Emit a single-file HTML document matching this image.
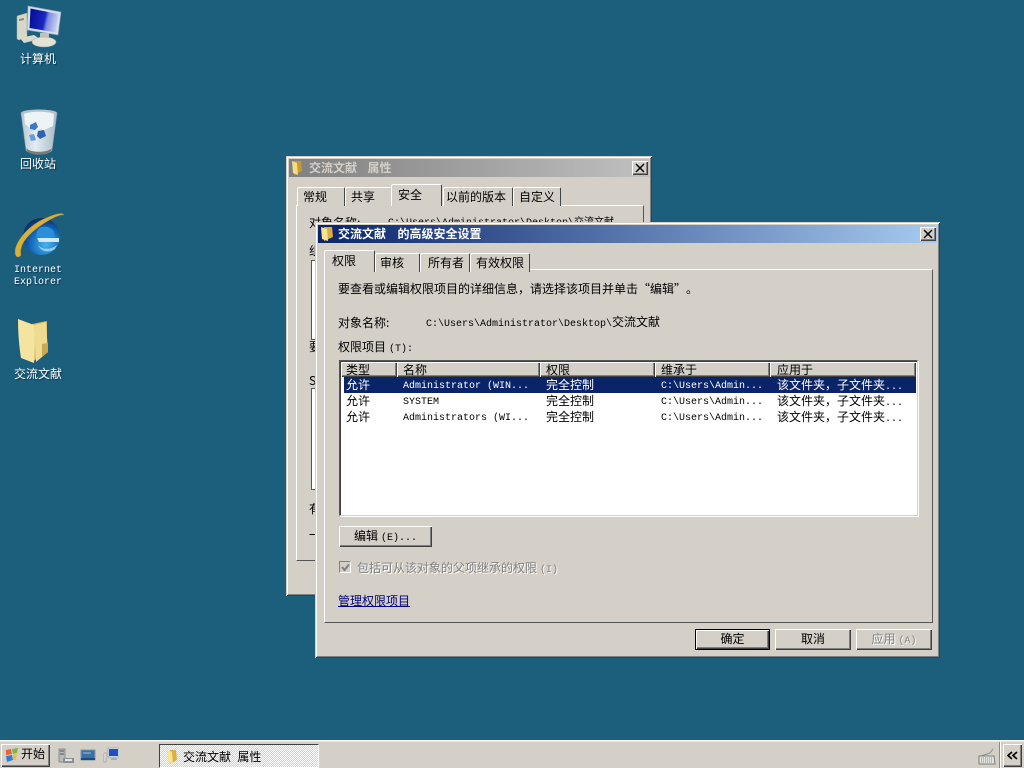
<!DOCTYPE html>
<html><head><meta charset="utf-8"><title>交流文献</title>
<style>
*{box-sizing:border-box}
html,body{margin:0;padding:0;width:1024px;height:768px;overflow:hidden;background:#1c5f7d}
body{position:relative;font:12px/14px "WenQuanYi Zen Hei","Noto Sans CJK SC",sans-serif;color:#000}
div,span,a,svg{position:absolute;white-space:pre}
.m{font-family:"Liberation Mono","WenQuanYi Zen Hei",monospace;font-size:10px;letter-spacing:0}
.s{position:static;margin-left:3px}
.d{position:static}
.q{position:static;display:inline-block;width:12px}
.win{background:#d4d0c8;box-shadow:inset 1px 1px 0 #d4d0c8,inset -1px -1px 0 #404040,inset 2px 2px 0 #fff,inset -2px -2px 0 #808080}
.panel{background:#d4d0c8;border:1px solid;border-color:#fff #555 #555 #fff}
.tab{background:#d4d0c8;border-left:1px solid #fff;border-top:1px solid #fff;border-right:1px solid #444;height:19px;text-align:left;border-radius:2px 2px 0 0;line-height:17px;padding-left:5px}
.tab.on{z-index:2;height:22px;background:#d4d0c8;line-height:19px;padding-left:7px}
.btn{background:#d4d0c8;box-shadow:inset 1px 1px 0 #fff,inset -1px -1px 0 #404040,inset -2px -2px 0 #808080;text-align:center;line-height:20px}
.x{width:16px;height:14px;background:#d4d0c8;box-shadow:inset 1px 1px 0 #fff,inset -1px -1px 0 #404040,inset -2px -2px 0 #808080}
.desk{color:#fff;text-align:center;width:76px;left:0;text-shadow:1px 1px 1px #0a3347}
.hd{top:1px;height:15px;background:#d4d0c8;box-shadow:inset 1px 1px 0 #fff,inset -1px -1px 0 #404040,inset -2px -2px 0 #808080;padding-left:5px;line-height:15px;overflow:hidden}
.w{color:#fff}
</style></head><body>

<!-- Desktop icons -->
<svg style="left:14px;top:4px" width="50" height="46" viewBox="0 0 50 46">
<defs><linearGradient id="scr" gradientUnits="userSpaceOnUse" x1="16" y1="14" x2="44" y2="20"><stop offset="0" stop-color="#05109a"/><stop offset=".5" stop-color="#1a26c0"/><stop offset=".62" stop-color="#7d8ce0"/><stop offset="1" stop-color="#cdd5f4"/></linearGradient></defs>
<path d="M3 12l10-3v24l-8 3-2-1z" fill="#d8d8c8" stroke="#a8a898" stroke-width=".5"/>
<path d="M5 15l5-1v2l-5 1z" fill="#8a8a72"/>
<path d="M6 34l14-3 6 4-16 4z" fill="#dadad0"/>
<path d="M14 2L47 8 44 31 13 26Z" fill="#d6e0ec" stroke="#8fa0b4" stroke-width=".7"/>
<path d="M16.500 4.500L44.500 10 42 28.500 15.500 24Z" fill="url(#scr)"/>
<path d="M26 29h9v6h-9z" fill="#c4c4b6"/>
<ellipse cx="30" cy="38" rx="12" ry="5" fill="#e2e2d6" stroke="#a4a498" stroke-width=".5"/>
</svg>
<div class="desk" style="top:52px">计算机</div>
<svg style="left:20px;top:108px" width="40" height="48" viewBox="0 0 40 48">
<defs><linearGradient id="bin" x1="0" x2="1"><stop offset="0" stop-color="#b4c6d2"/><stop offset=".4" stop-color="#e4ecf2"/><stop offset="1" stop-color="#a6bac6"/></linearGradient></defs>
<path d="M1 5C1 1 37 1 37 5L32 42C31 47 8 47 6 42Z" fill="url(#bin)" stroke="#8fa1ac" stroke-width=".6"/>
<ellipse cx="19" cy="5" rx="17.500" ry="3.500" fill="#b4c4ce"/>
<path d="M4 6C10 3 28 3 34 6L33 18 24 22 10 20 5 16Z" fill="#eef3f6"/>
<path d="M10 17l6-3 2 5-3 3-5-1z" fill="#3c78c8"/><path d="M18 23l6-1 2 6-6 3-3-3z" fill="#2f62b8"/><path d="M9 27l5-1 2 6-5 1z" fill="#6a9ad8"/>
<path d="M6 40C10 45 28 45 32 40L31 43C28 48 10 48 7 43Z" fill="#7b7b7a"/>
</svg>
<div class="desk" style="top:157px">回收站</div>
<svg style="left:14px;top:212px" width="50" height="50" viewBox="0 0 50 50">
<defs><radialGradient id="ie" cx=".62" cy=".72" r=".85"><stop offset="0" stop-color="#4ab4ea"/><stop offset=".5" stop-color="#1268bc"/><stop offset=".85" stop-color="#0a2f66"/><stop offset="1" stop-color="#04142e"/></radialGradient></defs>
<circle cx="27.500" cy="24.500" r="18.500" fill="url(#ie)"/>
<path d="M23 19C25 13 37 13 40 20L41 25H22Z" fill="#2a8ed8"/>
<path d="M23 26H45V30H25Z" fill="#cfeaf8"/>
<path d="M24 33C28 38 37 38 43 33L41 37C35 41 27 40 24 33Z" fill="#8cd0f2"/>
<path d="M2 44C-3 35 12 14 32 6 41 2 49 0 50 3 45 2 35 8 26 14 12 24 5 34 7 43 5 46 3 45 2 44Z" fill="#d8b03a" stroke="#a8852a" stroke-width=".4"/>
</svg>
<div class="desk m" style="top:265px;line-height:12px">Internet
Explorer</div>
<svg style="left:14px;top:316px" width="40" height="50" viewBox="0 0 40 50">
<path d="M18 8L33 5V36L18 46Z" fill="#d8b858"/>
<path d="M4 3L20 9C21 20 21 34 20 47L7 42C5 30 4 16 4 3Z" fill="#f4e4a0"/>
<path d="M20 9L32 6 34 36 22 46Z" fill="#eedb90"/><path d="M28 28l6-1v9l-6 5z" fill="#c8a850"/>
</svg>
<div class="desk" style="top:367px">交流文献</div>

<!-- Back window -->
<div class="win" style="left:286px;top:156px;width:366px;height:440px">
 <div style="left:3px;top:3px;width:360px;height:18px;background:linear-gradient(90deg,#808080,#c0c0c0)"></div>
 <svg style="left:5px;top:4px" width="12" height="16" viewBox="0 0 12 16"><path d="M3 1h7l1 10-8 4z" fill="#c99a34"/><path d="M1 1l5 2 1 12-5-2z" fill="#f6dc80"/></svg>
 <div style="left:23px;top:5px;color:#d4d0c8;font-weight:bold;word-spacing:2.500px">交流文献  属性</div>
 <div class="x" style="left:346px;top:5px"><svg style="left:3px;top:2px" width="10" height="10"><path d="M1 1L9 9M9 1L1 9" stroke="#000" stroke-width="1.500"/></svg></div>
 <div class="panel" style="left:10px;top:49px;width:348px;height:356px"></div>
 <div class="tab" style="left:11px;top:31px;width:48px">常规</div>
 <div class="tab" style="left:59px;top:31px;width:47px">共享</div>
 <div class="tab on" style="left:105px;top:28px;width:51px;padding-left:6px">安全</div>
 <div class="tab" style="left:157px;top:31px;width:70px;padding-left:2px">以前的版本</div>
 <div class="tab" style="left:227px;top:31px;width:48px">自定义</div>
 <div style="left:23px;top:60px">对象名称:</div>
 <div class="m" style="left:102px;top:61px">C:\Users\Administrator\Desktop\交流文献</div>
 <div style="left:23px;top:88px">组</div>
 <div style="left:25px;top:104px;width:300px;height:80px;background:#fff;border:1px solid #555"></div>
 <div style="left:23px;top:184px">要</div>
 <div style="left:23px;top:218px">S</div>
 <div style="left:25px;top:232px;width:300px;height:102px;background:#fff;border:1px solid #555"></div>
 <div style="left:23px;top:346px">有</div>
 <div style="left:23px;top:372px">一</div>
</div>

<!-- Front window -->
<div class="win" style="left:315px;top:222px;width:625px;height:436px;z-index:5">
 <div style="left:3px;top:3px;width:619px;height:18px;background:linear-gradient(90deg,#0a246a,#a6caf0)"></div>
 <svg style="left:5px;top:4px" width="14" height="16" viewBox="0 0 14 16"><path d="M4 1h8l1 10-9 4z" fill="#d9ae44"/><path d="M1 1l6 2 1 12-6-2z" fill="#f8e490"/></svg>
 <div style="left:23px;top:5px;color:#fff;font-weight:bold;word-spacing:3px">交流文献  的高级安全设置</div>
 <div class="x" style="left:605px;top:5px"><svg style="left:3px;top:2px" width="10" height="10"><path d="M1 1L9 9M9 1L1 9" stroke="#000" stroke-width="1.500"/></svg></div>

 <div class="panel" style="left:9px;top:47px;width:609px;height:354px"></div>
 <div class="tab" style="left:60px;top:31px;width:45px;padding-left:4px;line-height:18px">审核</div>
 <div class="tab" style="left:105px;top:31px;width:50px;padding-left:7px;line-height:18px">所有者</div>
 <div class="tab" style="left:155px;top:31px;width:60px;line-height:18px">有效权限</div>
 <div class="tab on" style="left:9px;top:28px;width:51px">权限</div>

 <div style="left:23px;top:60px">要查看或编辑权限项目的详细信息，请选择该项目并单击<span class="q" style="text-align:right">“</span>编辑<span class="q">”</span>。</div>
 <div style="left:23px;top:94px">对象名称:</div>
 <div class="m" style="left:111px;top:93px">C:\Users\Administrator\Desktop\<span style="position:static;font-size:12px;font-family:'WenQuanYi Zen Hei',sans-serif">交流文献</span></div>
 <div style="left:23px;top:118px">权限项目<span class="m s">(T):</span></div>

 <div style="left:24px;top:138px;width:579px;height:156px;background:#fff;border:1px solid;border-color:#555 #d4d0c8 #d4d0c8 #555;box-shadow:1px 1px 0 #fff,inset 1px 1px 0 #404040">
  <div class="hd" style="left:1px;width:56px">类型</div>
  <div class="hd" style="left:57px;width:143px;padding-left:6px">名称</div>
  <div class="hd" style="left:200px;width:115px;padding-left:6px">权限</div>
  <div class="hd" style="left:315px;width:115px;padding-left:6px">维承于</div>
  <div class="hd" style="left:430px;width:146px;padding-left:7px">应用于</div>
  <div style="left:4px;top:16px;width:572px;height:16px;background:#0a246a"></div>

  <div class="w" style="left:6px;top:17px">允许</div>
  <div class="w m" style="left:63px;top:19px">Administrator (WIN...</div>
  <div class="w" style="left:206px;top:17px">完全控制</div>
  <div class="w m" style="left:321px;top:19px">C:\Users\Admin...</div>
  <div class="w" style="left:437px;top:17px">该文件夹，子文件夹<span class="m d">...</span></div>

  <div style="left:6px;top:33px">允许</div>
  <div class="m" style="left:63px;top:35px">SYSTEM</div>
  <div style="left:206px;top:33px">完全控制</div>
  <div class="m" style="left:321px;top:35px">C:\Users\Admin...</div>
  <div style="left:437px;top:33px">该文件夹，子文件夹<span class="m d">...</span></div>

  <div style="left:6px;top:49px">允许</div>
  <div class="m" style="left:63px;top:51px">Administrators (WI...</div>
  <div style="left:206px;top:49px">完全控制</div>
  <div class="m" style="left:321px;top:51px">C:\Users\Admin...</div>
  <div style="left:437px;top:49px">该文件夹，子文件夹<span class="m d">...</span></div>
 </div>

 <div class="btn" style="left:24px;top:304px;width:93px;height:21px">编辑<span class="m s">(E)...</span></div>

 <div style="left:24px;top:339px;width:12px;height:12px;background:#d4d0c8;border:1px solid;border-color:#808080 #fff #fff #808080"><svg style="left:1px;top:1px" width="9" height="9"><path d="M1 4L3.500 7 8 1.500" fill="none" stroke="#808080" stroke-width="2"/></svg></div>
 <div style="left:42px;top:339px;color:#808080;text-shadow:1px 1px 0 #fff">包括可从该对象的父项继承的权限<span class="m s">(I)</span></div>
 <div style="left:23px;top:372px;color:#000080;text-decoration:underline">管理权限项目</div>

 <div class="btn" style="left:380px;top:407px;width:75px;height:21px;border:1px solid #000;line-height:18px">确定</div>
 <div class="btn" style="left:460px;top:407px;width:76px;height:21px">取消</div>
 <div class="btn" style="left:541px;top:407px;width:76px;height:21px;color:#808080;text-shadow:1px 1px 0 #fff">应用<span class="m s">(A)</span></div>
</div>

<!-- Taskbar -->
<div style="left:0;top:740px;width:1024px;height:28px;background:#d4d0c8;border-top:1px solid #fff;box-shadow:inset 0 1px 0 #e8e6e0;z-index:6">
 <div class="btn" style="left:1px;top:3px;width:49px;height:23px;line-height:20px;padding-left:20px;text-align:left">开始</div>
 <svg style="left:4px;top:6px" width="16" height="16" viewBox="0 0 16 16"><path d="M2 3l5-1 1 5-6 1z" fill="#e8642a"/><path d="M8 2l6-1-1 5-4 1z" fill="#7ab648"/><path d="M2 9l6-1 1 5-6 2z" fill="#3a7ad0"/><path d="M9 8l4-1-1 6-3 0z" fill="#f0c030"/></svg>

 <svg style="left:57px;top:6px" width="18" height="18" viewBox="0 0 18 18"><path d="M2 2h6v13H2z" fill="#b8bcb8" stroke="#70747a" stroke-width=".7"/><path d="M3 4h4M3 7h4" stroke="#555"/><path d="M6 11h11v5H6z" fill="#8a9098"/><path d="M8 12h7v2H8z" fill="#dfe3e6"/></svg>
 <svg style="left:80px;top:6px" width="16" height="16" viewBox="0 0 16 16"><path d="M1 3h14v10H1z" fill="#3d6fa0" stroke="#7f97ad"/><path d="M1 11h14v2H1z" fill="#1d4a80"/><path d="M3 5h8v2H3z" fill="#6d9ac4"/></svg>
 <svg style="left:103px;top:5px" width="16" height="17" viewBox="0 0 16 17"><path d="M1 7h2v9H1z" fill="#f3f3f0" stroke="#888" stroke-width=".6"/><path d="M5 2h11v9H5z" fill="#dfe6f0" stroke="#8090a0" stroke-width=".6"/><path d="M6 3h9v7H6z" fill="#1f4fc0"/><path d="M8 12h6v2H8z" fill="#a8acb0"/></svg>

 <div style="left:159px;top:3px;width:160px;height:24px;border:1px solid;border-color:#404040 #fff #fff #404040;background-color:#eeeae4;background-image:repeating-conic-gradient(#fff 0 25%,#d4d0c8 0 50%);background-size:2px 2px;padding:3px 0 0 23px;line-height:17px;word-spacing:.5px">交流文献  属性</div>
 <svg style="left:166px;top:8px" width="12" height="16" viewBox="0 0 12 16"><path d="M4 1h6l1 10-7 4z" fill="#d9ae44"/><path d="M1 1l5 2 1 12-5-2z" fill="#f8e490"/></svg>

 <svg style="left:978px;top:7px" width="18" height="17" viewBox="0 0 18 17"><path d="M3 8L12 5 15 1" fill="none" stroke="#8a8a86"/><path d="M1 8h15l1 8H1z" fill="#e4e4e0" stroke="#7c7c78"/><path d="M3 10h11M3 12h11M3 14h11" stroke="#8a8a86" stroke-dasharray="1 1"/></svg>
 <div style="left:999px;top:1px;width:1px;height:26px;background:#8c8a84;box-shadow:1px 0 0 #fff"></div>
 <div class="btn" style="left:1003px;top:3px;width:19px;height:23px"><svg style="left:4px;top:7px" width="12" height="9"><path d="M5 1L1 4.500 5 8M10 1L6 4.500 10 8" fill="none" stroke="#000" stroke-width="1.700"/></svg></div>
</div>
</body></html>
